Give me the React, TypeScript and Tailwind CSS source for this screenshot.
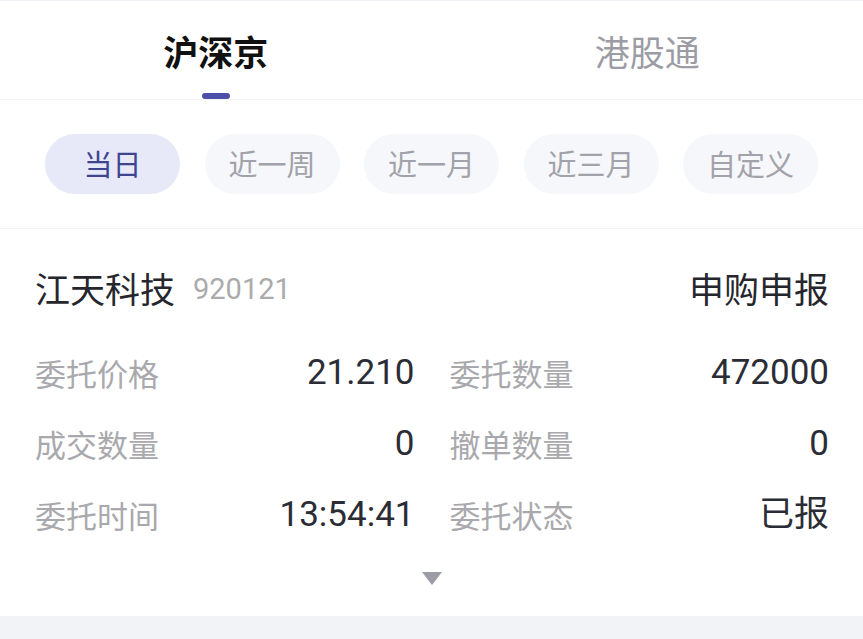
import { useState } from 'react';

const ranges = ['当日', '近一周', '近一月', '近三月', '自定义'];

const rows = [
  ['委托价格', '21.210', '委托数量', '472000'],
  ['成交数量', '0', '撤单数量', '0'],
  ['委托时间', '13:54:41', '委托状态', '已报'],
];

export default function App() {
  const [tab, setTab] = useState(0);
  const [range, setRange] = useState(0);

  return (
    <div className="w-[863px] h-[639px] overflow-hidden bg-white border-t border-[#eef2f7] font-['Noto_Sans_CJK_SC',sans-serif] flex flex-col">
      {/* Market tabs */}
      <div className="flex border-b border-[#f3f4f6]">
        {['沪深京', '港股通'].map((t, i) => (
          <button key={t} onClick={() => setTab(i)} className="w-1/2 flex flex-col items-center pt-[32px]">
            <span
              className={
                tab === i
                  ? 'text-[35px] leading-[35px] font-semibold text-[#111]'
                  : 'text-[35px] leading-[35px] text-[#9c9ca4]'
              }
            >
              {t}
            </span>
            <span className={tab === i ? 'mt-[25px] w-[28px] h-[6px] rounded-full bg-[#4a50a8]' : 'mt-[25px] h-[6px]'} />
          </button>
        ))}
      </div>

      {/* Range chips */}
      <div className="flex gap-[24.5px] px-[45px] pt-[34px] pb-[34px] border-b border-[#f2f3f5]">
        {ranges.map((r, i) => (
          <button
            key={r}
            onClick={() => setRange(i)}
            className={
              range === i
                ? 'w-[135px] h-[60px] rounded-full bg-[#e7e9f9] text-[#3e4490] text-[29px] flex items-center justify-center'
                : 'w-[135px] h-[60px] rounded-full bg-[#f6f7fa] text-[#a2a2aa] text-[29px] flex items-center justify-center'
            }
          >
            {r}
          </button>
        ))}
      </div>

      {/* Order card */}
      <div className="pl-[35px] pr-[34px] pt-[42px] flex-1">
        <div className="flex items-center justify-between h-[34px]">
          <div className="flex items-center gap-[18px]">
            <span className="text-[35px] leading-[34px] text-[#26272e]">江天科技</span>
            <span className="text-[29px] leading-[34px] text-[#ababab] font-['Roboto',sans-serif] mt-[2px]">920121</span>
          </div>
          <span className="text-[35px] leading-[34px] text-[#26272e]">申购申报</span>
        </div>

        <div className="mt-[33px]">
          {rows.map(([l1, v1, l2, v2]) => (
            <div key={l1} className="grid grid-cols-2 gap-x-[35px] h-[71px]">
              <div className="flex items-center justify-between">
                <span className="text-[31px] text-[#a9a9ad]">{l1}</span>
                <span className="text-[35px] text-[#2b2d36] font-['Roboto','Noto_Sans_CJK_SC',sans-serif]">{v1}</span>
              </div>
              <div className="flex items-center justify-between">
                <span className="text-[31px] text-[#a9a9ad]">{l2}</span>
                <span className="text-[35px] text-[#2b2d36] font-['Roboto','Noto_Sans_CJK_SC',sans-serif]">{v2}</span>
              </div>
            </div>
          ))}
        </div>

        <div className="flex justify-center mt-[21px]">
          <svg width="20" height="13" viewBox="0 0 20 13">
            <polygon points="0,0 20,0 10,13" fill="#9c9ca8" />
          </svg>
        </div>
      </div>

      <div className="h-[23px] bg-[#f1f3f6]" />
    </div>
  );
}
